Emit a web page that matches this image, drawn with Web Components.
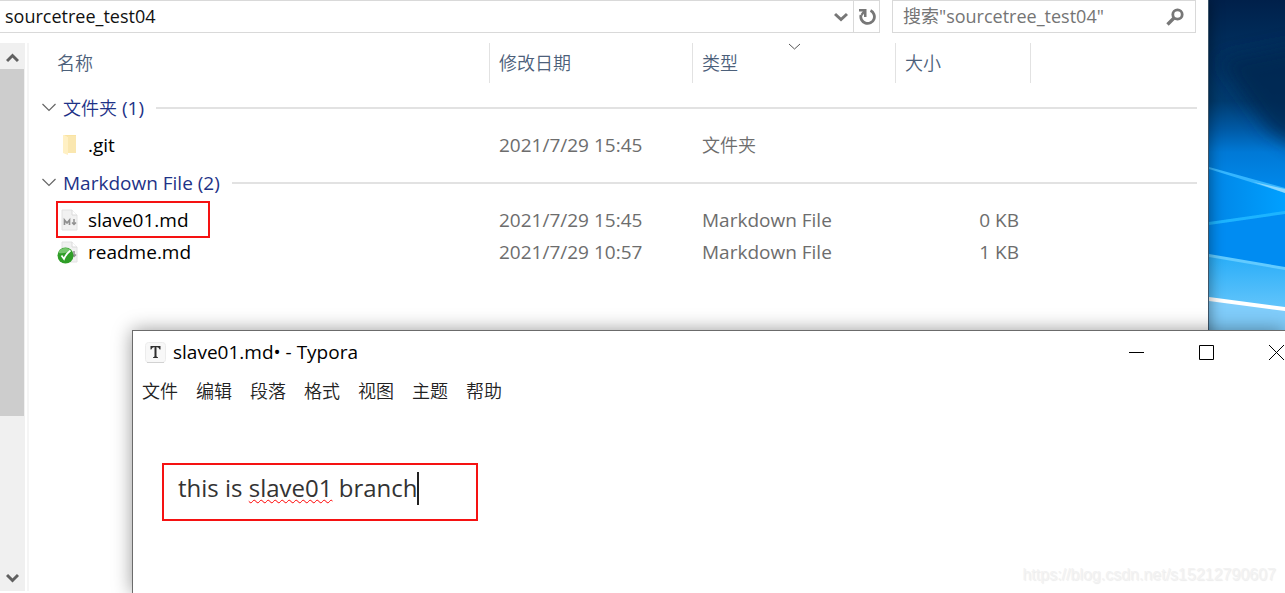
<!DOCTYPE html>
<html lang="zh-CN">
<head>
<meta charset="utf-8">
<title>sourcetree_test04</title>
<style>
html, body { height: 100%; }
body {
  margin: 0; background: #fff; overflow: hidden;
  font-family: "Open Sans", "Noto Sans CJK SC", sans-serif; font-size: 19px; line-height: 32px; color: #000;
}
</style>
</head>
<body>
<desk-top>
  <explorer-window slot="back">
    <address-bar slot="bar" path="sourcetree_test04" hint='搜索"sourcetree_test04"'></address-bar>
    <file-list></file-list>
  </explorer-window>
  <wall-paper slot="paper"></wall-paper>
  <app-window slot="front" caption="slave01.md• - Typora">
    <menu-bar items="文件,编辑,段落,格式,视图,主题,帮助"></menu-bar>
    <note-editor>this is <u>slave01</u> branch</note-editor>
  </app-window>
  <page-mark slot="mark">https://blog.csdn.net/s15212790607</page-mark>
</desk-top>
<script>
function define(name, render) {
  customElements.define(name, class extends HTMLElement {
    connectedCallback() {
      if (this.shadowRoot) return;
      const t = document.createElement('template');
      t.innerHTML = render(this);
      this.attachShadow({ mode: 'open' }).append(t.content.cloneNode(true));
    }
  });
}
const esc = s => s.replace(/"/g, '&quot;');
const buttonReset = 'button{border:0;padding:0;margin:0;background:none;font:inherit;color:inherit;display:flex;align-items:center;justify-content:center}svg{display:block}';

define('desk-top', () => `
<style>
:host{display:grid;grid-template-columns:minmax(0,1fr) 76px;height:100%;position:relative;overflow:hidden}
::slotted(app-window){position:absolute;left:132px;right:0;top:330px;bottom:0}
::slotted(page-mark){position:absolute;right:9px;bottom:6px}
</style><slot name="back"></slot><slot name="paper"></slot><slot name="front"></slot><slot name="mark"></slot>`);

define('explorer-window', () => `
<style>
:host{display:grid;grid-template-rows:auto minmax(0,1fr);row-gap:10px;background:#fff;border-right:1px solid #3c5468;box-shadow:0 0 14px rgba(0,0,0,.45);position:relative}
.body{display:grid;grid-template-columns:25px minmax(0,1fr);column-gap:2px;padding-bottom:2px}
.pane{border-left:2px solid #f5f5f5;padding:0 11px 0 12px}
</style>
<slot name="bar"></slot>
<div class="body"><scroll-bar></scroll-bar><div class="pane"><slot></slot></div></div>`);

define('address-bar', el => `
<style>${buttonReset}
:host{display:flex;gap:12px;height:33px;padding-right:12px;font-size:18px}
div{display:flex;box-sizing:border-box;border:1px solid #d9d9d9;background:#fff;min-width:0}
.path{flex:1;border-left:0}
.search{flex:0 0 304px}
input{flex:1;min-width:0;border:0;outline:0;padding:0;background:none;font:inherit;line-height:31px;color:#111}
.path input{padding-left:5px}
.search input{padding-left:10px}
input::placeholder{color:#757575;opacity:1}
.drop{width:24px}
.again{width:26px;border-left:1px solid #d9d9d9}
.find{width:40px}
</style>
<div class="path"><input aria-label="地址" value="${esc(el.getAttribute('path'))}">
<button class="drop" aria-label="展开"><svg width="14" height="10" viewBox="0 0 14 10"><path d="M1 2l6 5.500 6-5.500" fill="none" stroke="#777" stroke-width="3"/></svg></button>
<button class="again" aria-label="刷新"><svg width="18" height="18" viewBox="0 0 18 18"><path d="M12.500 2.500A6.800 6.800 0 1 1 3 7" fill="none" stroke="#777" stroke-width="2.800"/><path d="M1 1h7.500v8H6V3.500H1z" fill="#777"/><path d="M6.500 3L3.500 7" stroke="#777" stroke-width="2.400"/></svg></button></div>
<div class="search"><input type="search" aria-label="搜索" placeholder="${esc(el.getAttribute('hint'))}">
<button class="find" aria-label="搜索"><svg width="18" height="18" viewBox="0 0 18 18"><circle cx="11.500" cy="6.500" r="4.700" fill="none" stroke="#777" stroke-width="2.800"/><path d="M8 10l-6.500 6.500" stroke="#777" stroke-width="3.400"/></svg></button></div>`);

define('scroll-bar', () => `
<style>${buttonReset}
:host{display:grid;grid-template-rows:26px minmax(0,1fr) 26px;background:#f0f0f0}
.thumb{height:70%;width:24px;background:#cdcdcd}
button:first-of-type{padding-top:4px}
</style>
<button aria-label="向上滚动"><svg width="13" height="10" viewBox="0 0 13 10"><path d="M1 8l5.500-5.500L12 8" fill="none" stroke="#606060" stroke-width="3"/></svg></button>
<div><div class="thumb"></div></div>
<button aria-label="向下滚动"><svg width="13" height="10" viewBox="0 0 13 10"><path d="M1 2l5.500 5.500L12 2" fill="none" stroke="#606060" stroke-width="3"/></svg></button>`);

const page = '<path d="M3 1h10l5 5v15H3z" fill="#f1f1f1" stroke="#e2e2e2"/><path d="M13 1v5h5" fill="#fff" stroke="#dadada"/>';
const arrow = '<path d="M15 10v6M13 13.500l2 2 2-2" fill="none" stroke="#909090" stroke-width="1.500"/>';
const kinds = {
  folder: '<path d="M4 1h13v18H6z" fill="#f9e3a2"/><path d="M4 1h1l4 2v18l-5-2z" fill="#fff0c4"/><path d="M9 2h8v17H9z" fill="#fae7b0"/>',
  note: page + '<path d="M5.500 16v-5l2.500 3 2.500-3v5" fill="none" stroke="#909090" stroke-width="1.700"/>' + arrow,
  done: page + arrow + '<circle cx="6.500" cy="14.500" r="8" fill="#2f9e27"/><path d="M-.500 12a7 6 0 0 1 12-3q-4 4-12 3z" fill="#76c66e"/><path d="M2.500 14.500l2.500 3.500Q7 13 11.500 9.500" fill="none" stroke="#fff" stroke-width="1.800"/>'
};
define('file-icon', el => `
<style>:host{display:block;flex:none;width:20px;height:22px}svg{display:block;overflow:visible}</style>
<svg width="20" height="22" viewBox="0 0 20 22" aria-hidden="true">${kinds[el.getAttribute('kind')]}</svg>`);

define('mark-box', () => `
<style>:host{display:block;box-sizing:border-box;border:2px solid #f51212}</style><slot></slot>`);

const chevron = '<svg width="14" height="9" viewBox="0 0 14 9"><path d="M.500 1l6.500 6.500L13.500 1" fill="none" stroke="#666" stroke-width="1.200"/></svg>';
const group = (label, n) => `<tr class="group"><th colspan="5" scope="rowgroup"><div><button aria-label="折叠">${chevron}</button><span>${label} (${n})</span><i></i></div></th></tr>`;
const row = (kind, name, date, type, size, box = '') => `<tr><td class="name"><div><file-icon kind="${kind}"></file-icon><span>${name}</span></div>${box}</td><td>${date}</td><td>${type}</td><td class="size">${size}</td><td></td></tr>`;
define('file-list', () => `
<style>${buttonReset}
:host{display:block}
table{width:100%;table-layout:fixed;border-collapse:collapse;color:#6d6d6d}
th,td{padding:0;text-align:left;font-weight:400}
.c1{width:449px}.c2,.c3{width:203px}.c4{width:135px}
thead th{height:43px;vertical-align:top;color:#4c607a}
thead div{box-sizing:border-box;height:40px;line-height:40px;border-right:1px solid #e2e2e2;position:relative;padding-left:9px}
thead th:first-child div{padding-left:16px}
thead svg{position:absolute;left:calc(50% - 5px);top:0}
.cjk{font-size:18px;font-weight:350}
tbody td{height:32px;padding-left:9px}
tbody td.name{padding-left:18px;color:#000;position:relative}
.name div{display:flex;align-items:center;gap:9px}
.size{text-align:right}
tbody td.size{padding-right:12px}
.group th{height:43px;color:#1e3287}
.group div{display:flex;align-items:center;padding-left:1px}
.group div>span{margin:0 12px 0 7px}
.group i{flex:1;height:2px;background:#e2e2e2}
mark-box{position:absolute;left:15px;top:-3px;width:154px;height:37px}
</style>
<table>
<colgroup><col class="c1"><col class="c2"><col class="c3"><col class="c4"><col></colgroup>
<thead><tr><th scope="col"><div class="cjk">名称</div></th><th scope="col"><div class="cjk">修改日期</div></th><th scope="col"><div class="cjk">类型<svg width="11" height="7" viewBox="0 0 11 7"><path d="M0 1l5.500 5L11 1" fill="none" stroke="#555"/></svg></div></th><th scope="col"><div class="cjk">大小</div></th><td></td></tr></thead>
<tbody>${group('<span class="cjk">文件夹</span>', 1)}
${row('folder', '.git', '2021/7/29 15:45', '<span class="cjk">文件夹</span>', '')}</tbody>
<tbody>${group('Markdown File', 2)}
${row('note', 'slave01.md', '2021/7/29 15:45', 'Markdown File', '0 KB', '<mark-box></mark-box>')}
${row('done', 'readme.md', '2021/7/29 10:57', 'Markdown File', '1 KB')}</tbody>
</table>`);

define('wall-paper', () => `
<style>:host{display:block;background:#0090f0}svg{display:block;width:100%;height:332px}</style>
<svg viewBox="0 0 77 332" preserveAspectRatio="none" aria-hidden="true">
<defs><linearGradient id="sky" x1="0" y1="0" x2="0" y2="1"><stop offset="0" stop-color="#00204a"/><stop offset=".25" stop-color="#002f5e"/><stop offset=".52" stop-color="#003c70"/><stop offset=".66" stop-color="#0059a4"/><stop offset=".78" stop-color="#0079d6"/><stop offset="1" stop-color="#008cf0"/></linearGradient>
<linearGradient id="low" x1="0" y1="0" x2="0" y2="1"><stop offset="0" stop-color="#28adf8"/><stop offset="1" stop-color="#66c6fb"/></linearGradient>
<linearGradient id="mid" x1="0" y1="0" x2="1" y2="0"><stop offset="0" stop-color="#0085e6"/><stop offset="1" stop-color="#00a0ff"/></linearGradient>
<filter id="soft" x="-50%" y="-50%" width="200%" height="200%"><feGaussianBlur stdDeviation="9"/></filter><filter id="edge"><feGaussianBlur stdDeviation=".7"/></filter></defs>
<rect width="77" height="195" fill="url(#sky)"/>
<path d="M10 60L110 40V160L60 130z" fill="#00284f" opacity=".8" filter="url(#soft)"/>
<path d="M0 168L77 192V217L0 226z" fill="url(#mid)"/>
<path d="M0 222L77 212V270L0 256z" fill="#008cf2"/>
<path d="M0 255L77 269V312L0 300z" fill="url(#low)"/>
<path d="M0 299L77 309V332H0z" fill="#80cdfb"/>
<g filter="url(#edge)"><path d="M0 167L77 188V193L0 169z" fill="#35b6ff"/><path d="M45 182L77 189V193z" fill="#8ad8ff"/><path d="M0 222L77 211V214L0 225z" fill="#1fb4ff"/><path d="M0 254L77 267V270L0 257z" fill="#62cbff"/><path d="M0 297L77 307V311L0 301z" fill="#fff"/></g>
</svg>`);

define('app-window', el => `
<style>${buttonReset}
:host{display:block;background:#fff;border:1px solid #6b6b6b;border-right:0;border-bottom:0;box-shadow:0 0 18px rgba(0,0,0,.4);box-sizing:border-box}
header{display:flex;align-items:center;height:42px;padding:0 1px 0 12px}
header span{flex:1;margin-left:7px}
nav{display:flex;gap:55px}
nav button{height:42px;width:15px}
</style>
<header>
<svg width="21" height="21" viewBox="0 0 21 21" aria-hidden="true"><rect x=".500" y=".500" width="20" height="20" rx="3" fill="#f8f8f8" stroke="#ececec"/><path d="M2 20.500h17" stroke="#d2d2d2"/><path d="M5.500 4h10v3.500h-.800Q14 5 11.500 5v9q0 1.200 1.500 1.200v.800H8v-.800q1.500 0 1.500-1.200V5Q7 5 6.300 7.500H5.500z" fill="#2e2e2e"/></svg>
<span>${el.getAttribute('caption')}</span>
<nav><button aria-label="最小化"><svg width="15" height="15"><path d="M0 7.500h15" stroke="#000"/></svg></button><button aria-label="最大化"><svg width="15" height="15"><path d="M.500 .500h14v14H.500z" fill="none" stroke="#000"/></svg></button><button aria-label="关闭"><svg width="15" height="15"><path d="M0 0l15 15M15 0L0 15" stroke="#000"/></svg></button></nav>
</header>
<slot></slot>`);

define('menu-bar', el => `
<style>${buttonReset}
:host{display:flex;gap:18px;padding-left:9px;height:36px;align-items:center;font-size:18px;font-weight:350;color:#222}
</style>${el.getAttribute('items').split(',').map(s => `<button>${s}</button>`).join('')}`);

define('note-editor', () => `
<style>
:host{display:block;padding:54px 29px;font-size:24px;color:#333}
mark-box{width:316px;height:58px;padding:6px 14px}
div{display:flex;align-items:center}
p{margin:0;outline:0;white-space:pre;line-height:34px}
i{width:2px;height:33px;background:#222}
::slotted(u){text-decoration:underline wavy #ff0000 1px;text-underline-offset:2px;text-decoration-skip-ink:none}
</style>
<mark-box><div><p contenteditable="true" spellcheck="false" role="textbox" aria-label="正文"><slot></slot></p><i></i></div></mark-box>`);

define('page-mark', () => `
<style>:host{display:block;font-family:"Liberation Sans",sans-serif;font-size:16px;line-height:24px;color:#f2f2f2;text-shadow:1px 1px 1px #ececec}</style><slot></slot>`);
</script>
</body>
</html>
